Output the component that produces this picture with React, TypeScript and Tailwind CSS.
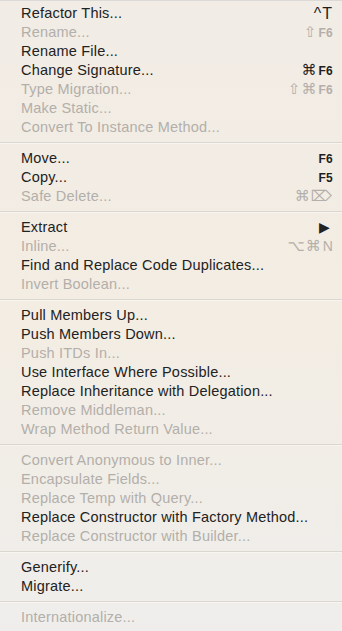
type Item = { label: string; enabled?: boolean; shortcut?: string; submenu?: boolean };

const groups: Item[][] = [
  [
    { label: "Refactor This...", enabled: true, shortcut: "^T" },
    { label: "Rename...", shortcut: "⇧F6" },
    { label: "Rename File...", enabled: true },
    { label: "Change Signature...", enabled: true, shortcut: "⌘F6" },
    { label: "Type Migration...", shortcut: "⇧⌘F6" },
    { label: "Make Static..." },
    { label: "Convert To Instance Method..." },
  ],
  [
    { label: "Move...", enabled: true, shortcut: "F6" },
    { label: "Copy...", enabled: true, shortcut: "F5" },
    { label: "Safe Delete...", shortcut: "⌘⌦" },
  ],
  [
    { label: "Extract", enabled: true, submenu: true },
    { label: "Inline...", shortcut: "⌥⌘N" },
    { label: "Find and Replace Code Duplicates...", enabled: true },
    { label: "Invert Boolean..." },
  ],
  [
    { label: "Pull Members Up...", enabled: true },
    { label: "Push Members Down...", enabled: true },
    { label: "Push ITDs In..." },
    { label: "Use Interface Where Possible...", enabled: true },
    { label: "Replace Inheritance with Delegation...", enabled: true },
    { label: "Remove Middleman..." },
    { label: "Wrap Method Return Value..." },
  ],
  [
    { label: "Convert Anonymous to Inner..." },
    { label: "Encapsulate Fields..." },
    { label: "Replace Temp with Query..." },
    { label: "Replace Constructor with Factory Method...", enabled: true },
    { label: "Replace Constructor with Builder..." },
  ],
  [
    { label: "Generify...", enabled: true },
    { label: "Migrate...", enabled: true },
  ],
  [{ label: "Internationalize..." }],
];

function Shortcut({ text, enabled }: { text: string; enabled?: boolean }) {
  const color = enabled ? "text-[#1e1e1e]" : "text-[#b3afaa]";
  if (text === "^T") {
    return <span className={`tracking-[1px] text-[16px] ${color}`}>^T</span>;
  }
  const m = text.match(/^([^A-Z0-9]*)(.*)$/);
  const syms = m ? m[1] : "";
  const key = m ? m[2] : text;
  return (
    <span className={`flex items-center gap-[1px] ${color}`}>
      {syms && (
        <span className="font-['DejaVu_Sans',sans-serif] text-[15px] tracking-[1px]">{syms}</span>
      )}
      {key && (
        <span className={key === "N" ? "text-[14px]" : "text-[12px] font-semibold"}>{key}</span>
      )}
    </span>
  );
}

export default function App() {
  return (
    <div className="h-[631px] w-[342px] overflow-hidden border-t border-[#dcdad6] bg-gradient-to-b from-[#f1ece5] via-[#f3ede3] to-[#efeeec] pt-[3px] font-['Liberation_Sans',Arial,sans-serif] text-[14.5px] tracking-[0.2px]">
      {groups.map((group, gi) => (
        <div key={gi}>
          {gi > 0 && (
            <div className="py-[5px]">
              <div className="h-[2px] border-t border-[#dad6d0] border-b border-b-[#f8f5f0]" />
            </div>
          )}
          {group.map((item) => (
            <div key={item.label} className="flex h-[19px] items-center justify-between pl-[21px] pr-[9px]">
              <span className={item.enabled ? "text-[#222222]" : "text-[#b3afaa]"}>{item.label}</span>
              {item.shortcut && <Shortcut text={item.shortcut} enabled={item.enabled} />}
              {item.submenu && <span className="mr-[3px] text-[14px] text-[#222222]">▶</span>}
            </div>
          ))}
        </div>
      ))}
    </div>
  );
}
